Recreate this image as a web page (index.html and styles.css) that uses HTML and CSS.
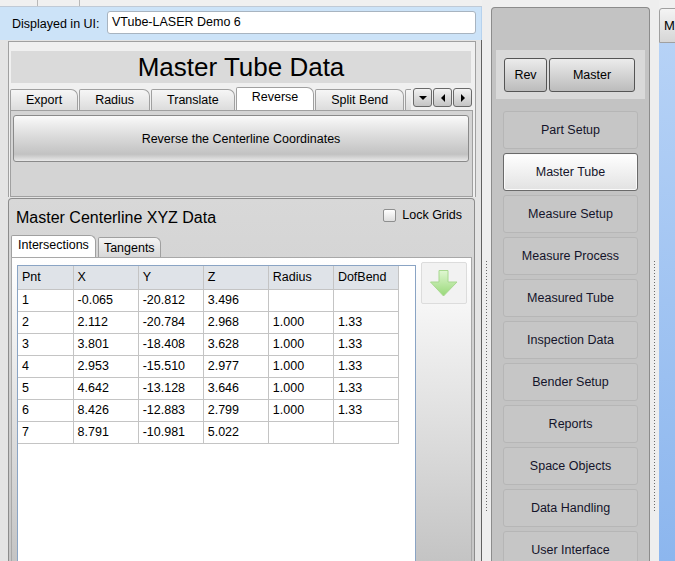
FILE: index.html
```html
<!DOCTYPE html>
<html lang="en">
<head>
  <meta charset="UTF-8" />
  <title>Master Tube Data</title>
  <link rel="stylesheet" href="styles.css">
</head>
<body>
  <div class="app">

    <!-- left column: data editor -->
    <div class="left-col">
      <div class="top-strip">
        <span class="strip-tab first"></span>
        <span class="strip-tab"></span>
      </div>

      <div class="ui-bar">
        <span class="ui-label">Displayed in UI:</span>
        <div class="ui-input">VTube-LASER Demo 6</div>
      </div>

      <div class="left-body">
        <div class="upper">
          <div class="title-bar">Master Tube Data</div>

          <div class="tab-row">
            <div class="tab-strip">
              <div class="tab">Export</div>
              <div class="tab">Radius</div>
              <div class="tab">Translate</div>
              <div class="tab active">Reverse</div>
              <div class="tab">Split Bend</div>
              <div class="tab tab-cut"></div>
            </div>
            <div class="scroll-btns">
              <span class="scroll-btn"><i class="tri down"></i></span>
              <span class="scroll-btn"><i class="tri left"></i></span>
              <span class="scroll-btn"><i class="tri right"></i></span>
            </div>
          </div>

          <div class="tab-pane">
            <button class="big-btn">Reverse the Centerline Coordinates</button>
          </div>
        </div>

        <div class="lower">
          <div class="group-head">
            <h2>Master Centerline XYZ Data</h2>
            <label class="lock"><span class="check"></span>Lock Grids</label>
          </div>

          <div class="subtabs">
            <div class="subtab active">Intersections</div>
            <div class="subtab">Tangents</div>
          </div>

          <div class="subpane">
            <div class="grid-view">
              <table class="grid">
                <thead>
                  <tr><th>Pnt</th><th>X</th><th>Y</th><th>Z</th><th>Radius</th><th>DofBend</th></tr>
                </thead>
                <tbody id="gridBody"></tbody>
              </table>
            </div>
            <button class="arrow-btn">
              <svg width="28" height="28" viewBox="0 0 28 28">
                <defs>
                  <linearGradient id="grn" x1="0" y1="0" x2="0" y2="1">
                    <stop offset="0" stop-color="#e0f7d2" />
                    <stop offset="1" stop-color="#98d878" />
                  </linearGradient>
                </defs>
                <polygon points="9,0.5 18,0.5 18,12 27,12 13.5,26 0.5,12 9,12" fill="url(#grn)" stroke="#a8d890" stroke-width="1" />
              </svg>
            </button>
          </div>
        </div>
      </div>
    </div>

    <div class="splitter"><span class="grip"></span></div>

    <!-- middle column: navigation -->
    <div class="nav-panel">
      <div class="rev-group">
        <button class="rev-btn">Rev</button>
        <button class="rev-btn wide">Master</button>
      </div>
      <div class="nav-list">
        <button class="nav-btn">Part Setup</button>
        <button class="nav-btn active">Master Tube</button>
        <button class="nav-btn">Measure Setup</button>
        <button class="nav-btn">Measure Process</button>
        <button class="nav-btn">Measured Tube</button>
        <button class="nav-btn">Inspection Data</button>
        <button class="nav-btn">Bender Setup</button>
        <button class="nav-btn">Reports</button>
        <button class="nav-btn">Space Objects</button>
        <button class="nav-btn">Data Handling</button>
        <button class="nav-btn">User Interface</button>
      </div>
    </div>

    <div class="splitter"><span class="grip"></span></div>

    <!-- right column (cut off) -->
    <div class="right-col">
      <div class="m-tab">M</div>
      <div class="blue-area"></div>
    </div>
  </div>

  <script>
    // centerline points
    const points = [
      ["1", "-0.065", "-20.812", "3.496", "", ""],
      ["2", "2.112", "-20.784", "2.968", "1.000", "1.33"],
      ["3", "3.801", "-18.408", "3.628", "1.000", "1.33"],
      ["4", "2.953", "-15.510", "2.977", "1.000", "1.33"],
      ["5", "4.642", "-13.128", "3.646", "1.000", "1.33"],
      ["6", "8.426", "-12.883", "2.799", "1.000", "1.33"],
      ["7", "8.791", "-10.981", "5.022", "", ""]
    ];

    const gridBody = document.getElementById("gridBody");
    points.forEach(row => {
      const tr = document.createElement("tr");
      row.forEach(val => {
        const td = document.createElement("td");
        td.textContent = val;
        tr.appendChild(td);
      });
      gridBody.appendChild(tr);
    });
  </script>
</body>
</html>
```

FILE: styles.css
```css
* {
  margin: 0;
  padding: 0;
  box-sizing: border-box;
}
body {
  background: #f0f0f0;
  font-family: "Liberation Sans", Arial, sans-serif;
  font-size: 12px;
  color: #000;
}
button {
  font-family: inherit;
  font-size: 12px;
  color: inherit;
}

.app {
  display: flex;
  width: 675px;
  height: 561px;
  overflow: hidden;
}

/* left column */
.left-col {
  width: 482px;
  flex-shrink: 0;
  display: flex;
  flex-direction: column;
  background: #e6e6e6;
  min-height: 0;
}
.top-strip {
  flex-shrink: 0;
  height: 7px;
  background: #f0f0f0;
  border-bottom: 1px solid #c0cad6;
  display: flex;
}
.strip-tab {
  width: 42px;
  border-right: 1px solid #b8b8b8;
}
.strip-tab.first {
  width: 38px;
}

.ui-bar {
  flex-shrink: 0;
  height: 33px;
  background: #cce3f8;
  border-right: 1px solid #b6d2ee;
  display: flex;
  align-items: center;
  padding: 0 5px 0 12px;
}
.ui-label {
  width: 95px;
  font-size: 12.5px;
}
.ui-input {
  flex: 1;
  height: 23px;
  margin-top: -2px;
  background: #fff;
  border: 1px solid #a8b4c0;
  border-radius: 3px;
  padding: 0 4px;
  line-height: 21px;
  font-size: 12.5px;
}

.left-body {
  flex: 1;
  min-height: 0;
  overflow: hidden;
  display: flex;
  flex-direction: column;
  padding: 1px 5px 0 8px;
  background: #e4e4e4;
  border-right: 1px solid #606060;
}

.upper {
  flex-shrink: 0;
  border: 1px solid #a0a0a0;
  border-bottom: none;
  background: #f0f0f0;
  padding: 9px 2px 0 1px;
}
.title-bar {
  height: 32px;
  margin: 0 2px 0 1px;
  background: #dadada;
  text-align: center;
  font-size: 26px;
  line-height: 33px;
}

.tab-row {
  display: flex;
  height: 23px;
  margin-top: 4px;
  align-items: flex-end;
}
.tab-strip {
  flex: 1;
  display: flex;
  gap: 1px;
  overflow: hidden;
  height: 23px;
  align-items: flex-end;
}
.tab {
  flex-shrink: 0;
  height: 21px;
  padding: 0 15px;
  line-height: 21px;
  font-size: 12.5px;
  background: linear-gradient(#f6f6f6, #dcdcdc);
  border: 1px solid #a0a0a0;
  border-bottom: none;
  border-radius: 2px 7px 0 0;
}
.tab.active {
  height: 23px;
  line-height: 18px;
  background: #fff;
}
.tab-cut {
  width: 60px;
}
.scroll-btns {
  display: flex;
  gap: 1px;
  padding: 0 1px 3px 2px;
}
.scroll-btn {
  width: 19px;
  height: 19px;
  border: 1px solid #6a6a6a;
  border-radius: 3px;
  background: linear-gradient(#f2f2f2, #c4c4c4);
  display: flex;
  align-items: center;
  justify-content: center;
}
.tri {
  width: 0;
  height: 0;
  border-style: solid;
  border-color: transparent;
}
.tri.down {
  border-width: 4px 4px 0 4px;
  border-top-color: #000;
}
.tri.left {
  border-width: 4px 4px 4px 0;
  border-right-color: #000;
}
.tri.right {
  border-width: 4px 0 4px 4px;
  border-left-color: #000;
}

.tab-pane {
  height: 87px;
  background: #d4d4d4;
  border: 1px solid #a0a0a0;
  padding: 4px 3px 0 2px;
}
.big-btn {
  width: 100%;
  height: 47px;
  border: 1px solid #8a8a8a;
  border-radius: 3px;
  background: linear-gradient(#fafafa 0%, #dedede 40%, #c2c2c2 85%, #e8e8e8 100%);
  font-size: 12.5px;
}

.lower {
  flex: 1;
  min-height: 0;
  margin: 1px 1px 0 0;
  border: 1px solid #8c8c8c;
  border-bottom: none;
  border-radius: 4px 4px 0 0;
  background: linear-gradient(#d8d8d8, #c6c6c6);
  display: flex;
  flex-direction: column;
}
.group-head {
  flex-shrink: 0;
  height: 36px;
  display: flex;
  justify-content: space-between;
  padding: 9px 12px 0 7px;
}
.group-head h2 {
  font-weight: normal;
  font-size: 16px;
  line-height: 20px;
}
.lock {
  display: flex;
  align-items: center;
  gap: 6px;
  font-size: 12.5px;
  height: 14px;
}
.check {
  width: 13px;
  height: 13px;
  border: 1px solid #8e8f8f;
  border-radius: 2px;
  background: linear-gradient(#ffffff, #dedede);
}

.subtabs {
  flex-shrink: 0;
  display: flex;
  align-items: flex-end;
  gap: 2px;
  height: 22px;
  padding-left: 2px;
}
.subtab {
  height: 20px;
  padding: 0 5px;
  line-height: 20px;
  font-size: 12.5px;
  border: 1px solid #a0a0a0;
  border-bottom: none;
  border-radius: 2px 6px 0 0;
  background: linear-gradient(#f4f4f4, #d8d8d8);
}
.subtab.active {
  height: 22px;
  line-height: 18px;
  padding: 0 6px;
  background: #fff;
}

.subpane {
  flex: 1;
  min-height: 0;
  margin: 0 2px 0 2px;
  border: 1px solid #a8a8a8;
  border-bottom: none;
  background: linear-gradient(#ffffff, #c4c4c4);
  display: flex;
  align-items: flex-start;
  gap: 5px;
  padding: 7px 0 0 5px;
}
.grid-view {
  width: 399px;
  height: 320px;
  flex-shrink: 0;
  background: #fff;
  border: 1px solid #8aa4c4;
}
.grid {
  table-layout: fixed;
  border-collapse: collapse;
  width: 381px;
}
.grid th,
.grid td {
  width: 65px;
  height: 22px;
  border: 1px solid #c4c4c4;
  border-top: none;
  padding: 0 4px;
  text-align: left;
  font-weight: normal;
  font-size: 12.5px;
  white-space: nowrap;
  overflow: hidden;
}
.grid th:first-child,
.grid td:first-child {
  width: 55px;
  border-left: none;
}
.grid th {
  height: 23px;
  background: #dfe3e8;
}

.arrow-btn {
  width: 46px;
  height: 42px;
  margin-top: -3px;
  border: 1px solid #dcdcdc;
  border-radius: 2px;
  background: #f2f2f2;
  display: flex;
  align-items: center;
  justify-content: center;
  padding-top: 2px;
}

/* splitters */
.splitter {
  width: 9px;
  flex-shrink: 0;
  background: #eeeeee;
  position: relative;
}
.grip {
  position: absolute;
  left: 3px;
  top: 260px;
  width: 3px;
  height: 252px;
  background-image: radial-gradient(#6a6a6a 0.8px, transparent 1px);
  background-size: 3px 3px;
}

/* navigation panel */
.nav-panel {
  width: 159px;
  flex-shrink: 0;
  margin-top: 7px;
  background: #c3c3c3;
  border: 1px solid #8c8c8c;
  border-bottom: none;
  border-radius: 4px 4px 0 0;
  padding: 42px 4px 0 4px;
  overflow: hidden;
}
.rev-group {
  display: flex;
  gap: 2px;
  background: #d9d9d9;
  padding: 8px 8px 7px 8px;
}
.rev-btn {
  width: 43px;
  height: 34px;
  border: 1px solid #555;
  border-radius: 3px;
  background: linear-gradient(#ececec, #bcbcbc);
  font-size: 12.5px;
}
.rev-btn.wide {
  width: 86px;
}
.nav-list {
  display: flex;
  flex-direction: column;
  gap: 4px;
  padding: 12px 7px 0 7px;
}
.nav-btn {
  flex-shrink: 0;
  height: 38px;
  border: 1px solid #b6b6b6;
  border-radius: 3px;
  background: #c6c6c6;
  color: #14142a;
  font-size: 12.5px;
}
.nav-btn.active {
  border: 1px solid #6a6a6a;
  background: linear-gradient(#ffffff, #e2e2e2);
  box-shadow: inset 0 0 0 1px #fafafa;
}

/* right column */
.right-col {
  flex: 1;
  display: flex;
  flex-direction: column;
  padding-top: 8px;
}
.m-tab {
  flex-shrink: 0;
  height: 35px;
  background: linear-gradient(#f4f4f4, #d6d6d6);
  border: 1px solid #a0a0a0;
  border-radius: 3px 0 0 0;
  padding: 9px 0 0 4px;
  font-size: 13px;
}
.blue-area {
  flex: 1;
  background: linear-gradient(#b6d2f6, #8cb6ee);
}
```
